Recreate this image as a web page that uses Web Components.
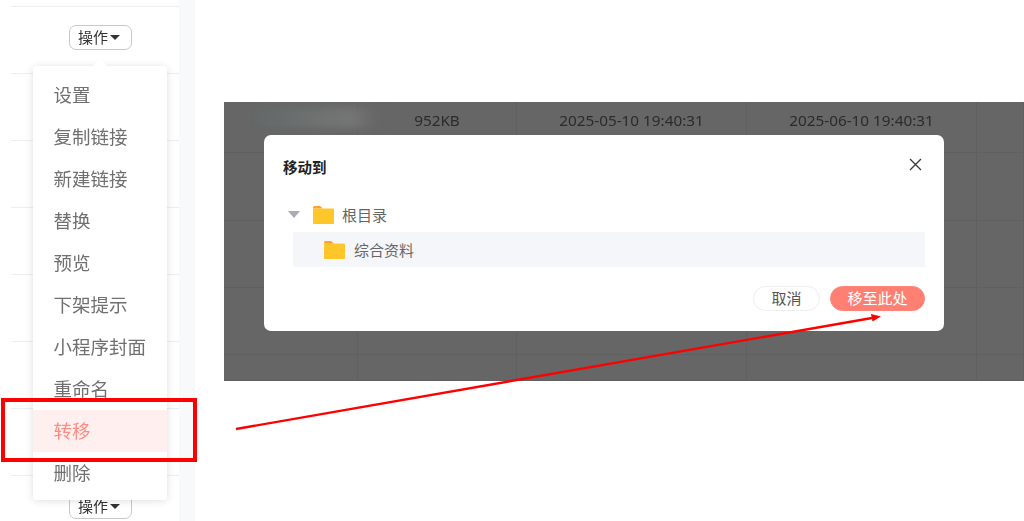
<!DOCTYPE html>
<html lang="zh">
<head>
<meta charset="utf-8">
<title>移动到</title>
<style>
html,body{margin:0;height:100%;background:#fff;overflow:hidden}
body{font-family:"Noto Sans","Noto Sans CJK SC",sans-serif}
</style>
</head>
<body>
<guide-page>
    <op-panel slot="left"></op-panel>
    <file-table slot="right">
        <move-dialog></move-dialog>
    </file-table>
</guide-page>

<script>
function shadow(self){
    self.$ = self.attachShadow({mode:'open'})
    self.$.innerHTML = self.html
}


class GuidePage extends HTMLElement{
    connectedCallback(){
        shadow(this)
    }

    get html(){
        return `
        <slot name="left"></slot>
        <div id="right"><slot name="right"></slot></div>
        <red-marks></red-marks>
        <style>
        :host{
            display:flex;
            position:relative;
            width:1024px;
            height:521px;
            overflow:hidden;
            filter:blur(.3px);
        }
        #right{
            flex:1;
            padding:102px 0 0 29px;
            min-width:0;
        }
        </style>
        `
    }
}


class OpButton extends HTMLElement{
    connectedCallback(){
        shadow(this)
    }

    get html(){
        return `
        操作<svg width="10" height="5" viewBox="0 0 10 5"><path d="M0 0H10L5 5Z" fill="#333"/></svg>
        <style>
        :host{
            display:flex;
            align-items:center;
            justify-content:center;
            gap:2px;
            box-sizing:border-box;
            width:63px;
            height:25px;
            padding-right:3px;
            border:1px solid #c8c8c8;
            border-radius:7px;
            background:#fff;
            color:#333;
            font-size:15px;
            line-height:1;
        }
        </style>
        `
    }
}


class OpMenu extends HTMLElement{
    connectedCallback(){
        shadow(this)
        const items = ['设置','复制链接','新建链接','替换','预览','下架提示','小程序封面','重命名','转移','删除']
        for(const name of items){
            const active = name === '转移' ? ' class="on"' : ''
            this.$.getElementById('list').insertAdjacentHTML('beforeend', `<li${active}>${name}</li>`)
        }
    }

    get html(){
        return `
        <i id="tip"></i>
        <ul id="list"></ul>
        <style>
        :host{
            display:block;
            position:absolute;
            left:33px;
            top:66px;
            width:134px;
            height:434px;
            box-sizing:border-box;
            padding:8px 0 6px;
            background:#fff;
            border-radius:4px;
            box-shadow:0 1px 8px rgba(0,0,0,.13);
        }
        #tip{
            position:absolute;
            left:62px;
            top:-5px;
            width:10px;
            height:10px;
            background:#fff;
            transform:rotate(45deg);
        }
        #list{
            position:relative;
            margin:0;
            padding:0;
            list-style:none;
        }
        li{
            height:42px;
            line-height:42px;
            padding-left:20.5px;
            font-size:18.5px;
            color:#707070;
        }
        .on{
            background:#fff0ef;
            color:#ff8c82;
        }
        </style>
        `
    }
}


class OpPanel extends HTMLElement{
    connectedCallback(){
        shadow(this)
    }

    get html(){
        return `
        <div class="row"><op-button></op-button></div>
        <div class="row"></div>
        <div class="row"></div>
        <div class="row"></div>
        <div class="row"></div>
        <div class="row"></div>
        <div class="row"></div>
        <div class="row"><op-button></op-button></div>
        <op-menu></op-menu>
        <style>
        :host{
            display:block;
            flex:none;
            width:195px;
            height:521px;
            box-sizing:border-box;
            border-right:16px solid #f8f9fb;
            padding:6px 0 0 11px;
            overflow:hidden;
        }
        .row{
            box-sizing:border-box;
            height:67px;
            padding:18px 0 0 58px;
            border-top:1px solid #eeeeee;
        }
        </style>
        `
    }
}


class FileTable extends HTMLElement{
    connectedCallback(){
        shadow(this)
    }

    get html(){
        return `
        <div id="grid">
            <div class="cell"><i id="smudge"></i></div>
            <div class="cell">952KB</div>
            <div class="cell">2025-05-10 19:40:31</div>
            <div class="cell">2025-06-10 19:40:31</div>
            <div class="cell"></div>
            ${'<div class="cell"></div>'.repeat(20)}
        </div>
        <slot></slot>
        <style>
        :host{
            display:block;
            position:relative;
            width:800px;
            height:279px;
            overflow:hidden;
            background:#666;
        }
        #grid{
            display:grid;
            grid-template-columns:134px 159px 230px 230px 47px;
            grid-template-rows:51px 68px 67px 67px 26px;
            color:#2b2b2b;
            font-size:15.3px;
        }
        .cell{
            box-sizing:border-box;
            position:relative;
            border-right:1px solid #606060;
            border-bottom:1px solid #606060;
            text-align:center;
            line-height:36px;
            white-space:nowrap;
        }
        #smudge{
            position:absolute;
            left:28px;
            top:6px;
            width:125px;
            height:20px;
            background:linear-gradient(90deg,#636868,#6f7372 55%,#767676 80%,#666);
            filter:blur(4px);
        }
        </style>
        `
    }
}


class FolderIcon extends HTMLElement{
    connectedCallback(){
        shadow(this)
    }

    get html(){
        return `
        <svg width="21" height="18" viewBox="0 0 21 18">
            <path d="M0 1.5Q0 0 1.5 0H7L10 2.5H0Z" fill="#ff9f2e"/>
            <path d="M0 2.5H20Q21 2.5 21 3.5V17Q21 18 20 18H1Q0 18 0 17Z" fill="#ffc629"/>
        </svg>
        <style>
        :host{display:block;line-height:0}
        </style>
        `
    }
}


class MoveDialog extends HTMLElement{
    connectedCallback(){
        shadow(this)
    }

    get html(){
        return `
        <header>
            <b>移动到</b>
            <svg width="13" height="13" viewBox="0 0 13 13"><path d="M1 1L12 12M12 1L1 12" stroke="#3a3a3a" stroke-width="1.3" fill="none"/></svg>
        </header>
        <div id="root" class="node">
            <svg width="12" height="7" viewBox="0 0 12 7"><path d="M0 0H12L6 7Z" fill="#a9abb5"/></svg>
            <folder-icon></folder-icon>
            <span>根目录</span>
        </div>
        <div id="child" class="node">
            <folder-icon></folder-icon>
            <span>综合资料</span>
        </div>
        <footer>
            <div id="cancel">取消</div>
            <div id="ok">移至此处</div>
        </footer>
        <style>
        :host{
            display:block;
            position:absolute;
            left:40px;
            top:33px;
            width:680px;
            height:196px;
            box-sizing:border-box;
            padding:0 19px;
            background:#fff;
            border-radius:7px;
        }
        header{
            display:flex;
            align-items:center;
            justify-content:space-between;
            height:62px;
            padding-right:3px;
            color:#222;
            font-size:14.5px;
        }
        header svg{
            margin-top:-4px;
        }
        .node{
            display:flex;
            align-items:center;
            font-size:15px;
            color:#666;
        }
        #root{
            height:35px;
            padding-left:5px;
        }
        #root svg{
            margin-right:13px;
        }
        #root folder-icon{
            margin-right:8px;
        }
        #child{
            height:35px;
            margin-left:10px;
            padding-left:31px;
            background:#f5f6fa;
        }
        #child folder-icon{
            margin-right:9px;
        }
        footer{
            display:flex;
            justify-content:flex-end;
            gap:10px;
            margin-top:19px;
        }
        footer div{
            box-sizing:border-box;
            height:25px;
            line-height:23px;
            text-align:center;
            border-radius:13px;
            font-size:15px;
        }
        #cancel{
            width:67px;
            border:1px solid #eee;
            color:#555;
        }
        #ok{
            width:95px;
            border:1px solid #ff8479;
            background:#ff7f73;
            color:#fff;
        }
        </style>
        `
    }
}


class RedMarks extends HTMLElement{
    connectedCallback(){
        shadow(this)
    }

    get html(){
        return `
        <i id="box"></i>
        <svg width="1024" height="521" viewBox="0 0 1024 521">
            <path d="M236 429L872 318" stroke="#f00" stroke-width="2.4" fill="none"/>
            <path d="M881 316.500L871 314L872.500 321.500Z" fill="#f00"/>
        </svg>
        <style>
        :host{
            position:absolute;
            inset:0;
            pointer-events:none;
        }
        svg{
            position:absolute;
            left:0;
            top:0;
        }
        #box{
            position:absolute;
            left:1px;
            top:398px;
            width:188px;
            height:56px;
            border:4px solid #f00;
        }
        </style>
        `
    }
}


customElements.define('guide-page', GuidePage)
customElements.define('op-button', OpButton)
customElements.define('op-menu', OpMenu)
customElements.define('op-panel', OpPanel)
customElements.define('file-table', FileTable)
customElements.define('folder-icon', FolderIcon)
customElements.define('move-dialog', MoveDialog)
customElements.define('red-marks', RedMarks)
</script>
</body>
</html>
